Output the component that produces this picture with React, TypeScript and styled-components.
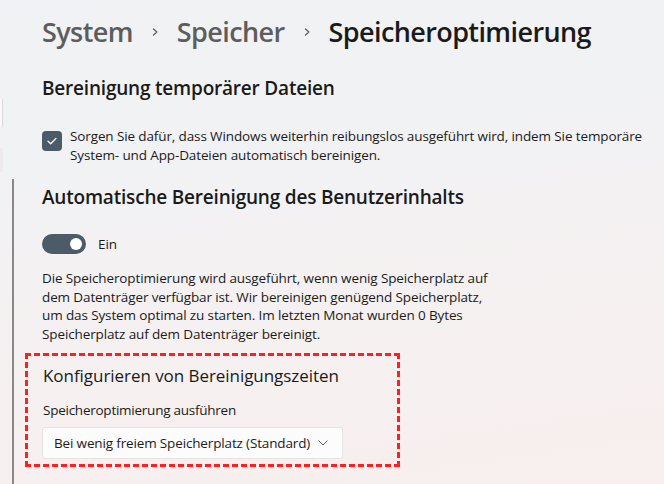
import React from "react";
import styled, { createGlobalStyle } from "styled-components";

const GlobalStyle = createGlobalStyle`
  html, body { margin: 0; padding: 0; }
  body {
    font-family: "Open Sans", "Noto Sans", "Liberation Sans", sans-serif;
    color: #1b1b1b;
    -webkit-font-smoothing: antialiased;
  }
`;

const Page = styled.div`
  display: flex;
  height: 484px;
  overflow: hidden;
  background: linear-gradient(172deg, #f0f2f5 0%, #f2f2f4 35%, #f6f0f0 70%, #f8efee 100%);
`;

const Rail = styled.nav`
  width: 42px;
  flex-shrink: 0;
  display: flex;
  flex-direction: column;
`;

const NavStub = styled.div<{ $top: number; $h: number; $fill: string; $edge: string }>`
  margin-top: ${(p) => p.$top}px;
  width: 2px;
  height: ${(p) => p.$h}px;
  background: ${(p) => p.$fill};
  border-right: 1px solid ${(p) => p.$edge};
  border-radius: 0 3px 3px 0;
`;

const RailLine = styled.div`
  margin-top: 7px;
  margin-left: 12px;
  width: 2px;
  flex: 1;
  background: #8c8888;
`;

const Main = styled.main`
  flex: 1;
  display: flex;
  flex-direction: column;
  padding-top: 14px;
`;

const Breadcrumb = styled.div`
  display: flex;
  align-items: center;
  gap: 18px;
  height: 36px;
  font-size: 27px;
  font-weight: 600;
  letter-spacing: -0.6px;
  line-height: 36px;
`;

const Crumb = styled.span<{ $current?: boolean }>`
  color: ${(p) => (p.$current ? "#1a1a1a" : "#5d5d5d")};
`;

const SectionTitle = styled.h2<{ $mt: number }>`
  margin: ${(p) => p.$mt}px 0 0;
  font-size: 19px;
  font-weight: 600;
  line-height: 28px;
  letter-spacing: -0.2px;
  color: #1a1a1a;
`;

const CheckRow = styled.label`
  display: flex;
  align-items: flex-start;
  gap: 8px;
  margin-top: 25px;
`;

const CheckBox = styled.span`
  flex-shrink: 0;
  width: 20px;
  height: 20px;
  margin-top: 4px;
  border-radius: 4px;
  background: #4b5b68;
  display: flex;
  align-items: center;
  justify-content: center;
`;

const Body = styled.p<{ $mt?: number }>`
  margin: ${(p) => p.$mt ?? 0}px 0 0;
  font-size: 13.5px;
  line-height: 18.6px;
  letter-spacing: -0.12px;
  color: #1b1b1b;
`;

const ToggleRow = styled.div`
  display: flex;
  align-items: center;
  gap: 12px;
  margin-top: 23px;
  height: 20px;
`;

const Switch = styled.span`
  width: 44px;
  height: 20px;
  border-radius: 10px;
  background: #4b5b68;
  display: flex;
  align-items: center;
  justify-content: flex-end;
  padding: 0 4px;
  box-sizing: border-box;
`;

const Knob = styled.span`
  width: 12px;
  height: 12px;
  border-radius: 50%;
  background: #ffffff;
`;

const ToggleLabel = styled.span`
  font-size: 13.5px;
  letter-spacing: -0.1px;
  color: #1b1b1b;
`;

const Highlight = styled.section`
  margin: 9px 0 0 -17px;
  width: 375px;
  height: 114px;
  box-sizing: border-box;
  border: 3px dashed #ff1f1f;
  padding: 8px 0 0 15px;
  display: flex;
  flex-direction: column;
`;

const SubTitle = styled.h3`
  margin: 0;
  font-size: 17px;
  font-weight: 400;
  line-height: 24px;
  letter-spacing: -0.05px;
  color: #1a1a1a;
`;

const FieldLabel = styled.div`
  margin-top: 13px;
  font-size: 13.5px;
  line-height: 19px;
  letter-spacing: -0.25px;
  color: #1b1b1b;
`;

const Dropdown = styled.button`
  margin: 7px 0 0 -1px;
  width: 301px;
  height: 32px;
  box-sizing: border-box;
  display: flex;
  align-items: center;
  justify-content: space-between;
  padding: 0 14px 0 11px;
  background: #fdfcfc;
  border: 1px solid #e6e3e3;
  border-radius: 3px;
  font-family: inherit;
  font-size: 13.5px;
  letter-spacing: -0.15px;
  color: #1b1b1b;
`;

const Chevron = () => (
  <svg width="8" height="12" viewBox="0 0 8 12" fill="none">
    <path d="M2.5 3 L5.8 6 L2.5 9" stroke="#5d5d5d" strokeWidth="1.3" strokeLinecap="round" strokeLinejoin="round" />
  </svg>
);

export default function App() {
  return (
    <>
      <GlobalStyle />
      <Page>
        <Rail>
          <NavStub $top={98} $h={30} $fill="#fbf9f9" $edge="#dedada" />
          <NavStub $top={20} $h={24} $fill="#eeeaea" $edge="#eeeaea" />
          <RailLine />
        </Rail>
        <Main>
          <Breadcrumb>
            <Crumb>System</Crumb>
            <Chevron />
            <Crumb>Speicher</Crumb>
            <Chevron />
            <Crumb $current>Speicheroptimierung</Crumb>
          </Breadcrumb>

          <SectionTitle $mt={24}>Bereinigung temporärer Dateien</SectionTitle>

          <CheckRow>
            <CheckBox>
              <svg width="12" height="10" viewBox="0 0 12 10" fill="none">
                <path d="M2 5.2 L4.7 7.8 L10 2.4" stroke="#ffffff" strokeWidth="1.3" strokeLinecap="round" strokeLinejoin="round" />
              </svg>
            </CheckBox>
            <Body>
              Sorgen Sie dafür, dass Windows weiterhin reibungslos ausgeführt wird, indem Sie temporäre
              <br />
              System- und App-Dateien automatisch bereinigen.
            </Body>
          </CheckRow>

          <SectionTitle $mt={19}>Automatische Bereinigung des Benutzerinhalts</SectionTitle>

          <ToggleRow>
            <Switch>
              <Knob />
            </Switch>
            <ToggleLabel>Ein</ToggleLabel>
          </ToggleRow>

          <Body $mt={15}>
            Die Speicheroptimierung wird ausgeführt, wenn wenig Speicherplatz auf
            <br />
            dem Datenträger verfügbar ist. Wir bereinigen genügend Speicherplatz,
            <br />
            um das System optimal zu starten. Im letzten Monat wurden 0 Bytes
            <br />
            Speicherplatz auf dem Datenträger bereinigt.
          </Body>

          <Highlight>
            <SubTitle>Konfigurieren von Bereinigungszeiten</SubTitle>
            <FieldLabel>Speicheroptimierung ausführen</FieldLabel>
            <Dropdown type="button">
              <span>Bei wenig freiem Speicherplatz (Standard)</span>
              <svg width="10" height="6" viewBox="0 0 10 6" fill="none">
                <path d="M0.8 0.8 L5 5 L9.2 0.8" stroke="#666" strokeWidth="1" strokeLinecap="round" strokeLinejoin="round" />
              </svg>
            </Dropdown>
          </Highlight>
        </Main>
      </Page>
    </>
  );
}
